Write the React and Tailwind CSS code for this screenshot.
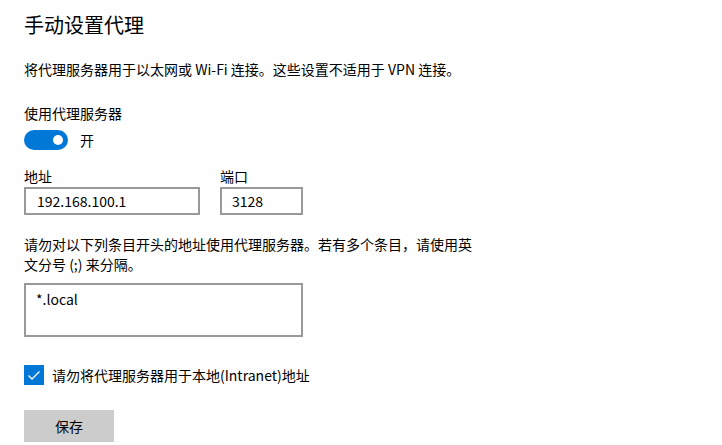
export default function App() {
  return (
    <div
      className="w-[722px] h-[445px] overflow-hidden bg-white px-6 text-black flex flex-col items-start"
      style={{ fontFamily: '"Noto Sans CJK SC", sans-serif' }}
    >
      <h1 className="mt-[11px] text-[20px] leading-[28px] font-normal">手动设置代理</h1>

      <p className="mt-5 text-[14px] leading-5">
        将代理服务器用于以太网或 Wi-Fi 连接。这些设置不适用于 VPN 连接。
      </p>

      <div className="mt-6 text-[14px] leading-5">使用代理服务器</div>
      <div className="mt-[7px] flex items-center h-5">
        <div className="w-[44px] h-5 rounded-full bg-[#0078d7] flex items-center justify-end pr-[5px]">
          <div className="w-[10px] h-[10px] rounded-full bg-white" />
        </div>
        <span className="ml-3 text-[14px] leading-5">开</span>
      </div>

      {/* Address / port */}
      <div className="mt-4 flex gap-5">
        <div className="flex flex-col">
          <label className="text-[14px] leading-5">地址</label>
          <div className="mt-px w-[176px] h-[28px] border-2 border-[#999999] px-[11px] flex items-center text-[14px]">
            192.168.100.1
          </div>
        </div>
        <div className="flex flex-col">
          <label className="text-[14px] leading-5">端口</label>
          <div className="mt-px w-[83px] h-[28px] border-2 border-[#999999] px-[10px] flex items-center text-[14px]">
            3128
          </div>
        </div>
      </div>

      <p className="mt-[19px] w-[452px] text-[14px] leading-5">
        请勿对以下列条目开头的地址使用代理服务器。若有多个条目，请使用英文分号 (;) 来分隔。
      </p>
      <div className="mt-[9px] w-[279px] h-[54px] border-2 border-[#999999] px-[10px] pt-[4px] text-[14px] leading-5">
        *.local
      </div>

      <div className="mt-7 flex items-center h-5">
        <div className="w-5 h-5 bg-[#0078d7] flex items-center justify-center">
          <svg width="20" height="20" viewBox="0 0 20 20" fill="none">
            <path d="M4.5 10.5 L8 14 L15.5 6.5" stroke="white" strokeWidth="1.3" />
          </svg>
        </div>
        <span className="ml-2 text-[14px] leading-5">请勿将代理服务器用于本地(Intranet)地址</span>
      </div>

      <button className="mt-[25px] w-[90px] h-8 bg-[#cccccc] text-[14px] text-black">保存</button>
    </div>
  );
}
